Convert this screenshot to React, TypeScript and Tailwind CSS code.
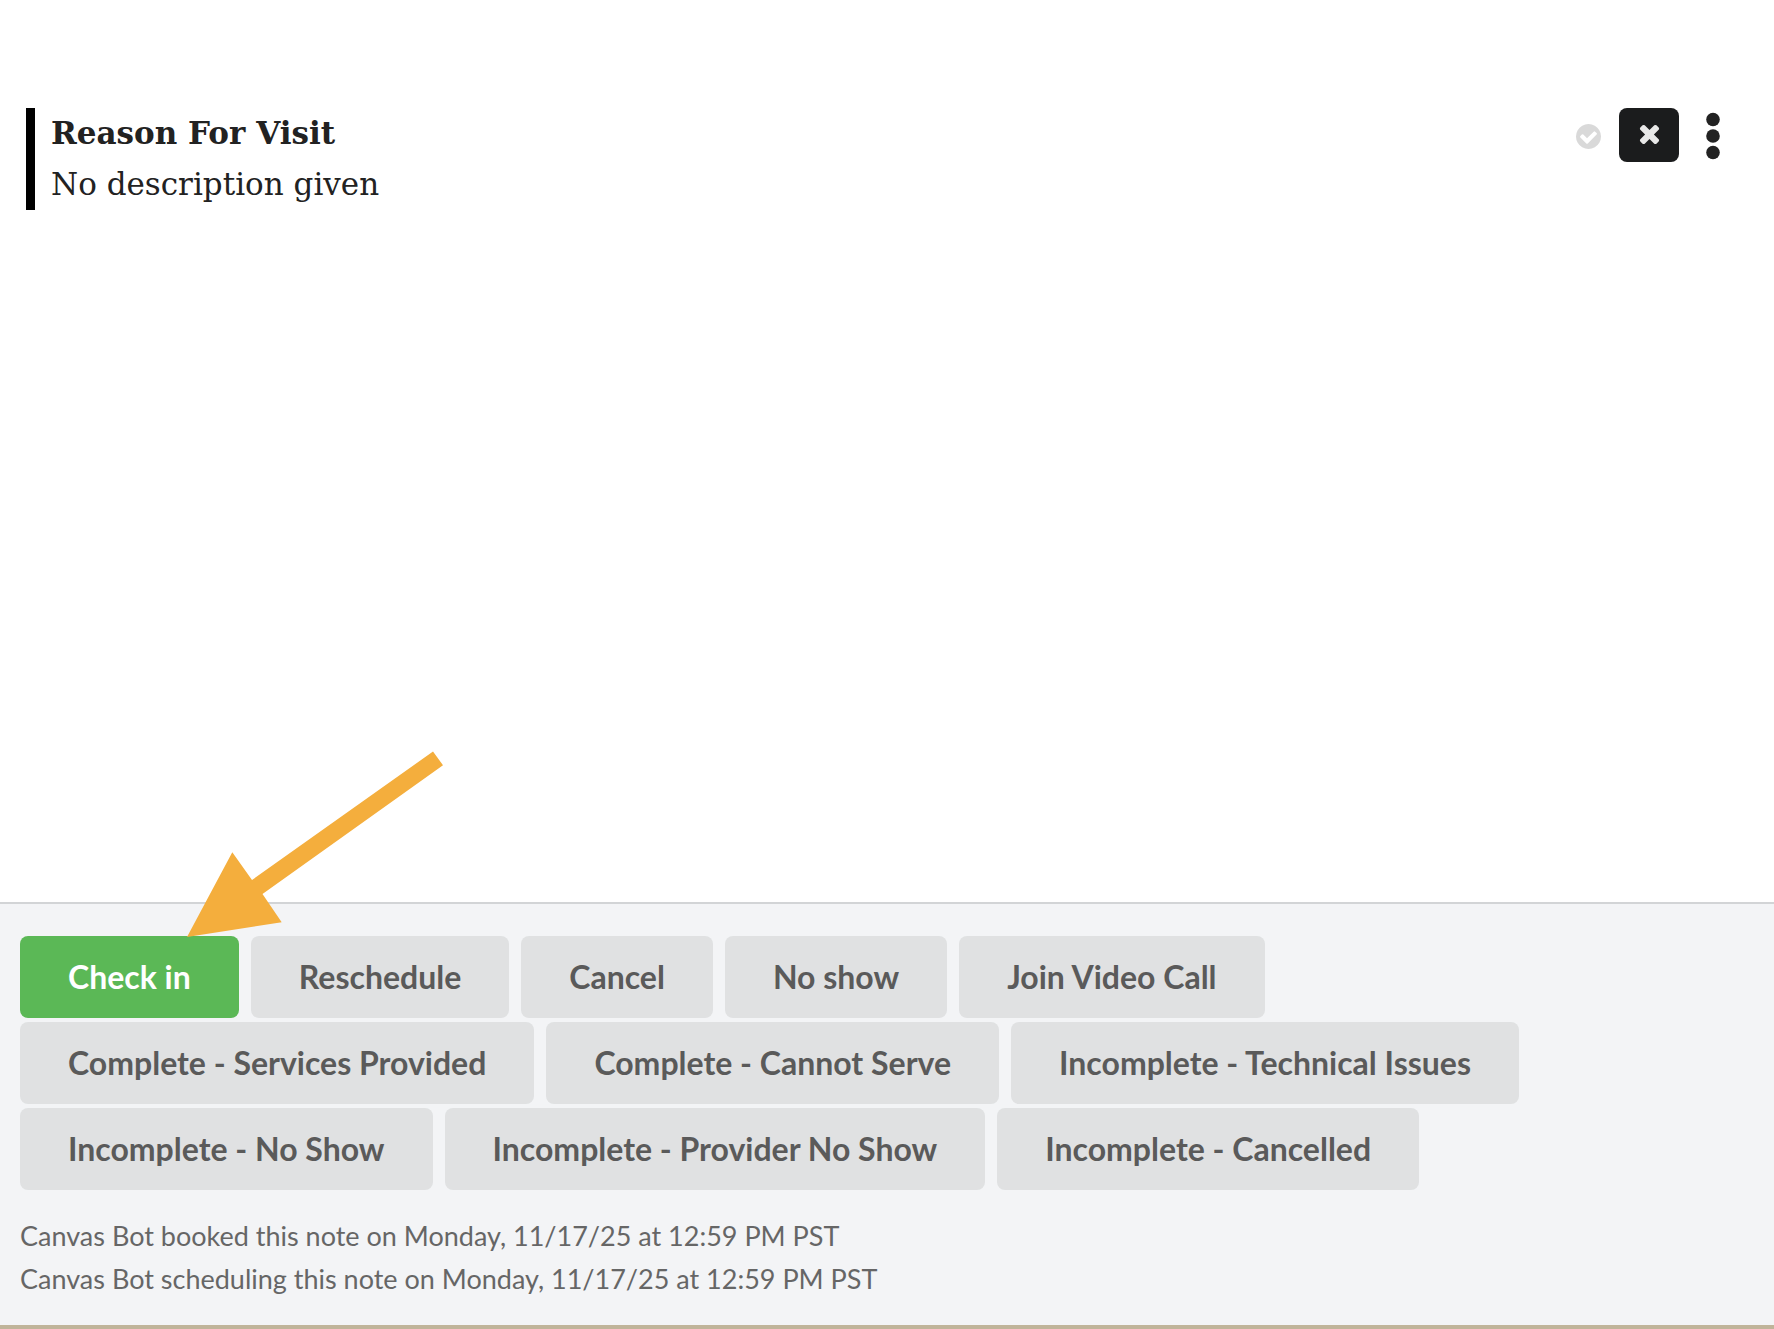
type Action = {
  label: string;
  primary?: boolean;
};

const actions: Action[] = [
  { label: 'Check in', primary: true },
  { label: 'Reschedule' },
  { label: 'Cancel' },
  { label: 'No show' },
  { label: 'Join Video Call' },
  { label: 'Complete - Services Provided' },
  { label: 'Complete - Cannot Serve' },
  { label: 'Incomplete - Technical Issues' },
  { label: 'Incomplete - No Show' },
  { label: 'Incomplete - Provider No Show' },
  { label: 'Incomplete - Cancelled' }
];

const history = [
  'Canvas Bot booked this note on Monday, 11/17/25 at 12:59 PM PST',
  'Canvas Bot scheduling this note on Monday, 11/17/25 at 12:59 PM PST'
];

const CheckCircleIcon = () => (
  <svg className="w-[25px] h-[25px]" viewBox="128 128 1536 1536" fill="currentColor" aria-hidden="true">
    <path d="M1412 734q0-28-18-46l-91-90q-19-19-45-19t-45 19l-408 407-226-226q-19-19-45-19t-45 19l-91 90q-18 18-18 46 0 27 18 45l362 362q19 19 45 19 27 0 46-19l543-543q18-18 18-45zm252 162q0 209-103 385.5t-279.5 279.5-385.5 103-385.5-103-279.5-279.5-103-385.5 103-385.5 279.5-279.5 385.5-103 385.5 103 279.5 279.5 103 385.5z" />
  </svg>
);

const CloseIcon = () => (
  <svg className="w-[29px] h-[29px]" viewBox="0 64 1792 1792" fill="currentColor" aria-hidden="true">
    <path d="M1490 1322q0 40-28 68l-136 136q-28 28-68 28t-68-28l-294-294-294 294q-28 28-68 28t-68-28l-136-136q-28-28-28-68t28-68l294-294-294-294q-28-28-28-68t28-68l136-136q28-28 68-28t68 28l294 294 294-294q28-28 68-28t68 28l136 136q28 28 28 68t-28 68l-294 294 294 294q28 28 28 68z" />
  </svg>
);

const MoreIcon = () => (
  <svg className="w-[14px] h-[48px]" viewBox="0 0 14 48" fill="currentColor" aria-hidden="true">
    <circle cx="7" cy="7.5" r="6.8" />
    <circle cx="7" cy="24" r="6.8" />
    <circle cx="7" cy="40.5" r="6.8" />
  </svg>
);

const Arrow = () => (
  <svg
    className="absolute left-[167px] bottom-[80px] w-[257px] h-[187px] max-w-none pointer-events-none"
    viewBox="0 0 257 187"
    fill="#f4ae3d"
    aria-hidden="true"
  >
    <path d="M0 186L45.3 101.3L65 129L246 0.5L256 14.2L75.5 143L94.7 171.2Z" />
  </svg>
);

const App = () => {
  return (
    <div className="min-h-screen flex flex-col bg-white">
      {/* Command */}
      <main className="flex-1 pt-[108px] pl-[26px] pr-[54px]">
        <section className="flex items-start justify-between">
          <div className="border-l-[9px] border-black pl-4 font-['DejaVu_Serif',serif] text-[31px] leading-[51px] text-[#222222]">
            <h1 className="font-bold">Reason For Visit</h1>
            <p>No description given</p>
          </div>

          <div className="flex items-center">
            <button type="button" aria-label="Commit" className="mr-[18px] pt-0.5 text-[#d9d9d9]">
              <CheckCircleIcon />
            </button>
            <button
              type="button"
              aria-label="Remove"
              className="mr-[27px] w-[60px] h-[54px] pb-0.5 rounded-lg bg-[#1b1c1d] text-[#e8e8e8] flex items-center justify-center"
            >
              <CloseIcon />
            </button>
            <button type="button" aria-label="More options" className="pt-0.5 text-[#222222]">
              <MoreIcon />
            </button>
          </div>
        </section>
      </main>

      {/* Note footer */}
      <footer className="border-t-2 border-t-[#d2d4d6] border-b-4 border-b-[#c0b49a] bg-[#f3f4f6] px-5 pt-8 pb-[25px] font-[Lato,sans-serif]">
        <div className="relative flex flex-wrap gap-x-3 gap-y-1">
          {actions.map((action) => (
            <button
              key={action.label}
              type="button"
              className={`h-[82px] rounded-lg px-12 text-[32px] leading-8 font-bold ${
                action.primary ? 'bg-[#5bb856] text-white' : 'bg-[#e0e1e2] text-[#5a5a5a]'
              }`}
            >
              {action.label}
            </button>
          ))}
          <div className="absolute left-0 top-0 h-[82px]">
            <Arrow />
          </div>
        </div>

        <div className="mt-6 text-[27px] leading-[43px] text-[#666666]">
          {history.map((entry) => (
            <p key={entry}>{entry}</p>
          ))}
        </div>
      </footer>
    </div>
  );
};

export default App;
